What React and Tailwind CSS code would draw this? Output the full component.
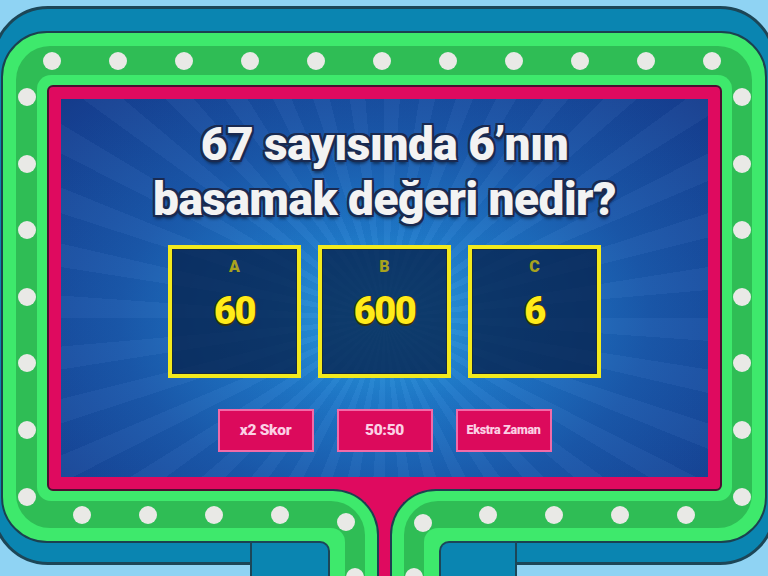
import React from "react";

const Dot = ({ className = "" }) => (
  <div className={"h-[18px] w-[18px] shrink-0 rounded-full bg-[#e9e9e6] " + className} />
);

const answers = [
  { key: "A", value: "60" },
  { key: "B", value: "600" },
  { key: "C", value: "6" },
];

const powers = ["x2 Skor", "50:50", "Ekstra Zaman"];

const AnswerBox = ({ label, value }) => (
  <div className="flex h-[133px] w-[133px] flex-col items-center border-[4px] border-[#f3ea1d] bg-[#082450]/80 shadow-[inset_0_0_0_1px_#1b2a3a]">
    <div className="mt-[8px] text-[16px] font-black leading-[20px] text-[#a8a21e]">{label}</div>
    <div className="mt-[12px] text-[38px] font-black leading-[44px] tracking-[-1.5px] text-[#ffeb1a] [text-shadow:0_2px_0_#3a3200,1px_0_0_#3a3200,-1px_0_0_#3a3200]">
      {value}
    </div>
  </div>
);

export default function App() {
  return (
    <div className="relative h-[576px] w-[768px] overflow-hidden bg-[#8fd3f3] font-['Roboto',sans-serif]">
      <div className="-mx-[8px] pt-[6px]">
        {/* outer blue frame */}
        <div className="h-[559px] rounded-[56px] border-[3px] border-[#1c4657] bg-[#0a85b1] px-[6px] pt-[22px]">
          {/* green light ring */}
          <div className="h-[512px] rounded-[46px] border-2 border-[#1b4150] bg-[#3ee96c] p-[13px]">
            <div className="grid h-full grid-cols-[21px_1fr_20px] grid-rows-[29px_1fr_27px] rounded-[34px] bg-[#2fbd55]">
              {/* top dots */}
              <div className="col-span-3 col-start-1 row-start-1 flex items-center gap-[48px] pl-[27px]">
                {Array.from({ length: 11 }).map((_, i) => (
                  <Dot key={i} />
                ))}
              </div>
              {/* left dots */}
              <div className="col-start-1 row-span-3 row-start-1 flex flex-col items-center gap-[48.6px] pt-[42px]">
                {Array.from({ length: 7 }).map((_, i) => (
                  <Dot key={i} />
                ))}
              </div>
              {/* right dots */}
              <div className="col-start-3 row-span-3 row-start-1 flex flex-col items-center gap-[48.6px] pt-[42px]">
                {Array.from({ length: 7 }).map((_, i) => (
                  <Dot key={i} />
                ))}
              </div>
              {/* bottom dots */}
              <div className="col-start-2 row-start-3 flex items-center justify-between pl-[36px] pr-[37px]">
                <div className="flex gap-[48px]">
                  {Array.from({ length: 4 }).map((_, i) => (
                    <Dot key={i} />
                  ))}
                </div>
                <div className="flex gap-[48px]">
                  {Array.from({ length: 4 }).map((_, i) => (
                    <Dot key={i} />
                  ))}
                </div>
              </div>

              {/* board */}
              <div className="col-start-2 row-start-2 rounded-[14px] bg-[#3ee96c] p-[10px]">
                <div className="h-full rounded-[6px] border-2 border-[#4a1030] bg-[#df0a5f] p-[12px]">
                  <div className="flex h-full flex-col items-center [background-image:repeating-conic-gradient(from_0deg_at_50%_58%,rgba(255,255,255,0.03)_0deg_4deg,rgba(0,0,0,0.025)_4deg_9deg),radial-gradient(ellipse_at_50%_58%,#2aa0e2_0%,#1f78c9_28%,#1a58ab_58%,#153c8e_100%)]">
                    <h1 className="pt-[18px] text-center text-[46px] font-black leading-[55px] tracking-[-0.5px] text-[#f3f3f3] [text-shadow:0_2px_0_#1a2a50,2px_0_0_#1a2a50,-2px_0_0_#1a2a50,0_-2px_0_#1a2a50,2px_2px_0_#1a2a50,-2px_2px_0_#1a2a50,2px_-2px_0_#1a2a50,-2px_-2px_0_#1a2a50,0_4px_3px_rgba(0,0,0,0.45)]">
                      67 sayısında 6’nın
                      <br />
                      basamak değeri nedir?
                    </h1>
                    <div className="mt-[18px] flex gap-[17px]">
                      {answers.map((a) => (
                        <AnswerBox key={a.key} label={a.key} value={a.value} />
                      ))}
                    </div>
                    <div className="mt-[31px] flex gap-[23px]">
                      {powers.map((p) => (
                        <div
                          key={p}
                          className={
                            "flex h-[43px] w-[96px] items-center justify-center border-2 border-[#f26aa8] bg-[#dc0a5c] font-black tracking-[-0.3px] text-[#fbd0e4] " +
                            (p === "Ekstra Zaman" ? "text-[12.5px]" : "text-[15.5px]")
                          }
                        >
                          {p}
                        </div>
                      ))}
                    </div>
                  </div>
                </div>
              </div>
            </div>
          </div>
        </div>
      </div>

      {/* stem at bottom centre */}
      <div className="absolute left-[330px] top-[484px] h-[92px] w-[110px] bg-[#df0a5f]" />
      <div className="absolute left-[300px] top-[489px] h-[100px] w-[79px] rounded-tr-[46px] border-r-2 border-t-2 border-[#1b4150] bg-[#3ee96c] pr-[12px] pt-[10px]">
        <div className="h-full rounded-tr-[34px] bg-[#2fbd55] pr-[20px] pt-[27px]">
          <div className="h-full rounded-tr-[14px] bg-[#3ee96c] pr-[15px] pt-[13px]">
            <div className="-ml-[50px] h-full rounded-tr-[10px] border-2 border-b-0 border-[#1c4657] bg-[#0a85b1]" />
          </div>
        </div>
        <Dot className="absolute left-[37px] top-[22px]" />
        <Dot className="absolute left-[46px] top-[77px]" />
      </div>
      <div className="absolute left-[390px] top-[489px] h-[100px] w-[80px] rounded-tl-[46px] border-l-2 border-t-2 border-[#1b4150] bg-[#3ee96c] pl-[12px] pt-[10px]">
        <div className="h-full rounded-tl-[34px] bg-[#2fbd55] pl-[20px] pt-[27px]">
          <div className="h-full rounded-tl-[14px] bg-[#3ee96c] pl-[15px] pt-[13px]">
            <div className="-mr-[47px] h-full rounded-tl-[10px] border-2 border-b-0 border-[#1c4657] bg-[#0a85b1]" />
          </div>
        </div>
        <Dot className="absolute left-[22px] top-[23px]" />
        <Dot className="absolute left-[13px] top-[77px]" />
      </div>
    </div>
  );
}
